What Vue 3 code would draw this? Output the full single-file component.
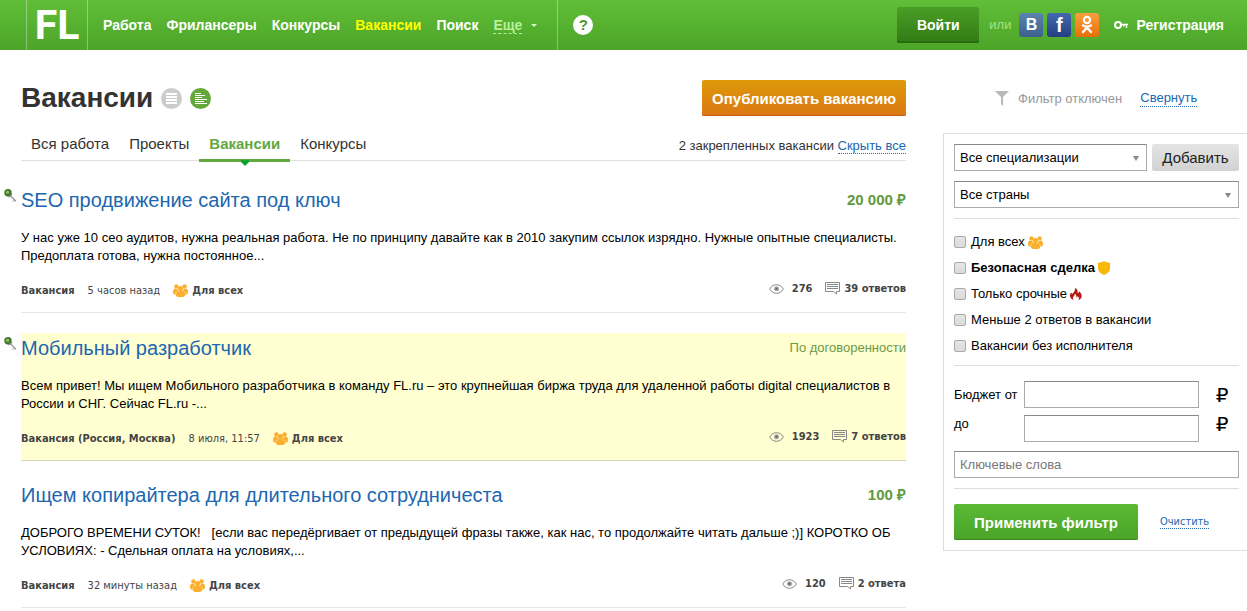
<script setup>
import { ref } from 'vue'

const navItems = [
  { label: 'Работа' },
  { label: 'Фрилансеры' },
  { label: 'Конкурсы' },
  { label: 'Вакансии', active: true },
  { label: 'Поиск' },
]

const tabs = [
  { label: 'Вся работа' },
  { label: 'Проекты' },
  { label: 'Вакансии', active: true },
  { label: 'Конкурсы' },
]

const vacancies = [
  {
    title: 'SEO продвижение сайта под ключ',
    price: '20 000 ₽',
    text: 'У нас уже 10 сео аудитов, нужна реальная работа. Не по принципу давайте как в 2010 закупим ссылок изрядно. Нужные опытные специалисты. Предоплата готова, нужна постоянное...',
    kind: 'Вакансия',
    time: '5 часов назад',
    views: '276',
    answers: '39 ответов',
    pinned: true,
  },
  {
    title: 'Мобильный разработчик',
    price: 'По договоренности',
    negotiable: true,
    text: 'Всем привет! Мы ищем Мобильного разработчика в команду FL.ru – это крупнейшая биржа труда для удаленной работы digital специалистов в России и СНГ. Сейчас FL.ru -...',
    kind: 'Вакансия (Россия, Москва)',
    time: '8 июля, 11:57',
    views: '1923',
    answers: '7 ответов',
    pinned: true,
    highlighted: true,
  },
  {
    title: 'Ищем копирайтера для длительного сотрудничеста',
    price: '100 ₽',
    text: 'ДОБРОГО ВРЕМЕНИ СУТОК! \u00a0 [если вас передёргивает от предыдущей фразы также, как нас, то продолжайте читать дальше ;)] КОРОТКО ОБ УСЛОВИЯХ: - Сдельная оплата на условиях,...',
    kind: 'Вакансия',
    time: '32 минуты назад',
    views: '120',
    answers: '2 ответа',
  },
]

const options = ref([
  { id: 'all', label: 'Для всех', icon: 'people', checked: false },
  { id: 'safe', label: 'Безопасная сделка', icon: 'shield', bold: true, checked: false },
  { id: 'urgent', label: 'Только срочные', icon: 'fire', checked: false },
  { id: 'few', label: 'Меньше 2 ответов в вакансии', checked: false },
  { id: 'free', label: 'Вакансии без исполнителя', checked: false },
])

const budgetFrom = ref('')
const budgetTo = ref('')
const keywords = ref('')
</script>

<template>
  <svg class="sprite" aria-hidden="true">
    <symbol id="people" viewBox="0 0 15 13">
      <circle cx="3.4" cy="2.4" r="2.200" />
      <circle cx="11.600" cy="2.4" r="2.200" />
      <path d="M0 7.800C0 5.400 1.200 4.400 3 4.600L5 6L4 10.500H1.600C.5 10.500 0 9.400 0 7.800Z" />
      <path d="M15 7.800C15 5.400 13.800 4.400 12 4.600L10 6L11 10.500H13.400C14.500 10.500 15 9.400 15 7.800Z" />
      <circle cx="7.500" cy="4.600" r="2.700" />
      <path d="M2.800 10.500C2.800 8 4.300 6.700 6 6.700H9C10.700 6.700 12.200 8 12.200 10.500C12.200 12 11.200 13 9.800 13H5.200C3.800 13 2.800 12 2.800 10.500Z" />
      <path d="M5 5.500L6 7.300M10 5.500L9 7.300M3.400 7.800L2.800 10M11.600 7.800L12.200 10" stroke="#ffe2a8" stroke-width=".7" />
    </symbol>
    <symbol id="shield" viewBox="0 0 12 14">
      <path d="M6 0C7.500 1.100 9.500 1.700 12 1.700V7.500C12 10.500 9.500 12.500 6 14C2.500 12.500 0 10.500 0 7.500V1.700C2.500 1.700 4.500 1.100 6 0Z" />
    </symbol>
    <symbol id="fire" viewBox="0 0 12 12">
      <path d="M5 0C8 1.200 7.800 3.400 7.600 5.200C8.600 4.800 9 4.100 9 3.200C11 4.700 12 6.800 11.600 8.700C11.300 10.300 10.300 11.400 8.500 12C9.300 10.300 8.800 8.900 7.700 7.900C7.500 9 7 9.400 6.400 9.500C6.500 7.700 6 6.500 4.800 5.700C5 7.300 3.300 8.300 3 9.800C2.900 10.700 3.200 11.400 3.700 12C1.500 11.300 .2 9.900 0 8C-.1 6.500 .6 5.500 1.300 4.600L2.100 6.100C3.800 4.700 5.400 2.500 5 0Z" />
    </symbol>
    <symbol id="eye" viewBox="0 0 15 10">
      <path d="M.6 5C2.500 2 4.900 .7 7.500 .7S12.500 2 14.400 5C12.500 8 10.100 9.300 7.500 9.300S2.500 8 .6 5Z" fill="none" stroke="#888" />
      <circle cx="7.500" cy="4.700" r="2.500" fill="#aaa" />
      <circle cx="7.500" cy="4.700" r="1.200" fill="#666" />
    </symbol>
    <symbol id="bubble" viewBox="0 0 15 13">
      <path d="M.5.500H14.500V9.500H11.500V12L8.500 9.500H.5Z" fill="none" stroke="#888" />
      <path d="M2 2.500H13M2 4.500H13M2 6.500H13" stroke="#888" shape-rendering="crispEdges" />
    </symbol>
    <symbol id="pin" viewBox="0 0 13 13">
      <path d="M6.500 6L12 12H8" stroke="#b6bac4" fill="none" />
      <path d="M6 6.500L11.500 12" stroke="#656b76" />
      <circle cx="4" cy="3.800" r="3.700" fill="#3c7a29" />
      <path d="M4.500 8L8 5" stroke="#6d9160" stroke-width="1.500" />
      <circle cx="3.600" cy="3.200" r="1.700" fill="#91b867" />
    </symbol>
  </svg>

  <header class="top">
    <a class="logo" href="#">FL</a>
    <nav class="nav">
      <a v-for="n in navItems" :key="n.label" href="#" :class="{ active: n.active }">{{ n.label }}</a>
      <button class="more" type="button"><span>Еще</span><i></i></button>
    </nav>
    <div class="help-cell"><a class="help" href="#" aria-label="Помощь">?</a></div>
    <div class="account">
      <button class="login" type="button">Войти</button>
      <span class="or">или</span>
      <div class="socials">
        <a class="vk" href="#">B</a>
        <a class="fb" href="#">f</a>
        <a class="ok" href="#" aria-label="OK">
          <svg width="12" height="20" viewBox="0 0 12 20" fill="none" stroke="#fff" stroke-linecap="round">
            <circle cx="6" cy="5" r="3.100" stroke-width="2.200" />
            <path d="M2 10.500Q6 13 10 10.500M6 12.500L2 17M6 12.500L10 17" stroke-width="2.400" />
          </svg>
        </a>
      </div>
      <a class="register" href="#">
        <svg width="14" height="8" viewBox="0 0 14 8" fill="none" stroke="#fff">
          <circle cx="4" cy="4" r="3" stroke-width="2" />
          <path d="M7 3.500H14M12.500 4V7M10 4V5.500" stroke-width="1.500" />
        </svg>
        <span>Регистрация</span>
      </a>
    </div>
  </header>

  <div class="page">
    <main>
      <div class="heading">
        <h1>Вакансии</h1>
        <button class="round" type="button" aria-label="Кратко">
          <svg width="21" height="21" viewBox="0 0 21 21"><circle cx="10.500" cy="10.500" r="10.500" fill="#ccc" /><path d="M5 6H16M5 9H16M5 12H16M5 15H16" stroke="#fff" stroke-width="2" /></svg>
        </button>
        <button class="round" type="button" aria-label="Подробно">
          <svg width="21" height="21" viewBox="0 0 21 21"><circle cx="10.500" cy="10.500" r="10.500" fill="#63a83a" /><path d="M5 5.500H11M5 7.500H15M5 9.500H12M5 11.500H17M5 13.500H14M5 15.500H17" stroke="#fff" /></svg>
        </button>
        <button class="publish" type="button">Опубликовать вакансию</button>
      </div>

      <div class="tabs">
        <a v-for="t in tabs" :key="t.label" href="#" :class="{ current: t.active }">
          {{ t.label }}
          <svg v-if="t.active" class="heart" width="8" height="6" viewBox="0 0 8 6"><path d="M0 0H3L4 1L5 0H8V2L4 6L0 2Z" fill="#0da02c" /></svg>
        </a>
        <p class="pinned-info">2 закрепленных вакансии <a class="dotted" href="#">Скрыть все</a></p>
      </div>

      <article v-for="v in vacancies" :key="v.title" class="item" :class="{ highlighted: v.highlighted }">
        <svg v-if="v.pinned" class="pin" width="13" height="13"><use href="#pin" /></svg>
        <div class="item-head">
          <h2><a href="#">{{ v.title }}</a></h2>
          <span class="price" :class="{ negotiable: v.negotiable }">{{ v.price }}</span>
        </div>
        <p class="desc">{{ v.text }}</p>
        <div class="meta">
          <b>{{ v.kind }}</b>
          <span class="time">{{ v.time }}</span>
          <svg class="people" width="15" height="13"><use href="#people" /></svg>
          <b>Для всех</b>
          <div class="stats">
            <svg width="15" height="10"><use href="#eye" /></svg>
            <b class="views">{{ v.views }}</b>
            <svg width="15" height="13"><use href="#bubble" /></svg>
            <b class="answers">{{ v.answers }}</b>
          </div>
        </div>
      </article>
    </main>

    <aside>
      <div class="filter-state">
        <svg width="14" height="15" viewBox="0 0 14 15"><path d="M0 0H14L8 6V15L6 13V6Z" fill="#b9b9b9" /></svg>
        <span>Фильтр отключен</span>
        <a class="dotted" href="#">Свернуть</a>
      </div>

      <form class="panel" @submit.prevent>
        <div class="row">
          <div class="select">
            <select aria-label="Специализация"><option>Все специализации</option></select>
            <svg width="6" height="5"><path d="M0 0H6L3 5Z" fill="#888" /></svg>
          </div>
          <button class="add" type="button">Добавить</button>
        </div>
        <div class="select countries">
          <select aria-label="Страна"><option>Все страны</option></select>
          <svg width="6" height="5"><path d="M0 0H6L3 5Z" fill="#888" /></svg>
        </div>

        <div class="checks">
          <label v-for="o in options" :key="o.id" :class="{ strong: o.bold }">
            <input v-model="o.checked" type="checkbox" />
            <span>{{ o.label }}</span>
            <svg v-if="o.icon" :class="o.icon"><use :href="'#' + o.icon" /></svg>
          </label>
        </div>

        <div class="budget">
          <label for="budget-from">Бюджет от</label>
          <input id="budget-from" v-model="budgetFrom" type="text" />
          <span class="rub">₽</span>
          <label class="to" for="budget-to">до</label>
          <input id="budget-to" v-model="budgetTo" type="text" />
          <span class="rub to">₽</span>
        </div>
        <input v-model="keywords" class="keywords" type="text" placeholder="Ключевые слова" aria-label="Ключевые слова" />

        <div class="actions">
          <button class="apply" type="submit">Применить фильтр</button>
          <a class="dotted clear" href="#">Очистить</a>
        </div>
      </form>
    </aside>
  </div>
</template>

<style>
body {
  margin: 0;
  background: #fff;
  overflow-x: hidden;
}
#app {
  font: 13px/18px "Liberation Sans", Arial, sans-serif;
  color: #000;
}
</style>

<style scoped>
* {
  box-sizing: border-box;
}
h1, h2, p {
  margin: 0;
  font-weight: normal;
}
a {
  color: #2067b0;
  text-decoration: none;
}
button, input, select {
  font-family: inherit;
  margin: 0;
}
button {
  border: 0;
  padding: 0;
  background: none;
  cursor: pointer;
}
svg {
  flex: none;
  display: block;
}
.sprite {
  position: absolute;
  width: 0;
  height: 0;
}

/* Header */
.top {
  display: flex;
  height: 50px;
  padding-left: 26px;
  padding-right: 23px;
  background: linear-gradient(#60be37, #4da529);
  font-weight: bold;
}
.logo {
  width: 62px;
  border: solid rgba(255, 255, 255, .35);
  border-width: 0 1px;
  color: #fff;
  font: bold 41px/50px Roboto, "Open Sans", sans-serif;
  text-align: center;
}
.nav {
  display: flex;
  align-items: center;
  gap: 15px;
  padding: 0 20px 0 15px;
  border-right: 1px solid rgba(255, 255, 255, .35);
  font-size: 14px;
}
.nav a, .register {
  color: #fff;
}
.nav a.active {
  color: #ff0;
}
.more {
  display: flex;
  align-items: center;
  gap: 9px;
  color: #b9f09c;
  font-size: 14px;
  font-weight: bold;
}
.more span {
  border-bottom: 1px dashed #b9f09c;
}
.more i {
  border: 3px solid transparent;
  border-top-color: #d6f5c8;
  border-bottom: 0;
}
.help-cell {
  display: flex;
  align-items: center;
  padding-left: 15px;
}
.help {
  width: 20px;
  height: 20px;
  border-radius: 50%;
  background: #fff;
  color: #4b9a2a;
  font-size: 15px;
  line-height: 20px;
  text-align: center;
}
.account {
  display: flex;
  align-items: center;
  margin-left: auto;
}
.login {
  width: 82px;
  height: 36px;
  border-radius: 2px;
  background: linear-gradient(#4a9e26, #317b14);
  box-shadow: inset 0 -2px #286a10;
  color: #fff;
  font-size: 14px;
  font-weight: bold;
}
.or {
  margin: 0 8px 0 10px;
  color: #a6e386;
  font-weight: normal;
}
.socials {
  display: flex;
  gap: 4px;
  margin-right: 15px;
}
.socials a {
  display: flex;
  justify-content: center;
  align-items: center;
  width: 24px;
  height: 24px;
  border-radius: 3px;
  color: #fff;
}
.socials .vk {
  background: linear-gradient(#5b83ac, #3c618c);
  font-size: 16px;
}
.socials .fb {
  background: linear-gradient(#4568ae, #243f82);
  font-size: 20px;
}
.socials .ok {
  background: linear-gradient(#f9a040, #e96d05);
}
.register {
  display: flex;
  align-items: center;
  gap: 8px;
  font-size: 14px;
}

/* Page */
.page {
  display: grid;
  grid-template-columns: minmax(0, 1fr) 304px;
  gap: 37px;
  padding-left: 21px;
}
main {
  padding-top: 30px;
}
.heading {
  display: flex;
  align-items: center;
  height: 36px;
}
h1 {
  margin-right: 8px;
  color: #333;
  font-size: 28px;
  font-weight: bold;
  line-height: 36px;
}
.round {
  margin-right: 8px;
}
.publish {
  height: 36px;
  margin-left: auto;
  padding: 0 10px;
  border-radius: 2px;
  background: linear-gradient(#dd9a0b, #db7713);
  box-shadow: inset 0 -1px #c95f16;
  color: #fff;
  font-size: 15px;
  font-weight: bold;
}
.tabs {
  display: flex;
  height: 45px;
  margin-bottom: 24px;
  padding-top: 13px;
  border-bottom: 1px solid #e1e1e1;
}
.tabs > a {
  position: relative;
  height: 33px;
  padding: 0 10px;
  color: #333;
  font-size: 15px;
  line-height: 30px;
}
.tabs > .current {
  border-bottom: 3px solid #62a83f;
  color: #62a83f;
  font-weight: bold;
}
.heart {
  position: absolute;
  left: 50%;
  top: 31px;
  margin-left: -4px;
}
.pinned-info {
  margin-left: auto;
  color: #333;
  line-height: 33px;
}
.dotted {
  border-bottom: 1px dotted #2067b0;
}

/* Vacancies */
.item {
  position: relative;
  margin-bottom: 20px;
  padding-bottom: 12px;
  border-bottom: 1px solid #e6e6e6;
}
.highlighted {
  margin-bottom: 19px;
  background: #ffffd2;
  border-color: #d6d6b8;
}
.pin {
  position: absolute;
  left: -17px;
  top: 4px;
}
.item-head {
  display: flex;
  justify-content: space-between;
  line-height: 30px;
}
h2 {
  font-size: 20px;
}
.price {
  color: #5f9a3c;
  font-size: 15px;
  font-weight: bold;
}
.negotiable {
  font-size: 13px;
  font-weight: normal;
  color: #6b9a45;
}
.desc {
  margin: 14px 0 16px;
}
.meta {
  display: flex;
  align-items: center;
  color: #444;
  font: 11px/19px Tahoma, "DejaVu Sans Condensed", "Noto Sans", sans-serif;
}
.time {
  margin: 0 13px;
}
.people {
  width: 15px;
  height: 13px;
  margin-right: 4px;
  fill: #fbaf2e;
}
.stats {
  display: flex;
  align-items: center;
  align-self: flex-start;
  margin-left: auto;
  line-height: 15px;
}
.views {
  margin: 0 13px 0 8px;
}
.answers {
  margin-left: 4px;
}

/* Filter */
.filter-state {
  display: flex;
  align-items: center;
  height: 83px;
  padding: 14px 0 0 52px;
  color: #999;
}
.filter-state span {
  margin: 0 18px 0 9px;
}
.filter-state .dotted {
  line-height: 16px;
}
.panel {
  padding: 10px 8px 10px 10px;
  border: 1px solid #ddd;
  border-right: 0;
}
.row {
  display: flex;
  gap: 5px;
}
.select {
  position: relative;
  flex: 1;
}
.select svg {
  position: absolute;
  right: 8px;
  top: 12px;
  pointer-events: none;
}
select, .panel input[type="text"] {
  display: block;
  width: 100%;
  height: 27px;
  padding: 0 5px;
  border: 1px solid #aaa;
  border-top-color: #888;
  border-radius: 0;
  background: #fff;
  color: #000;
  font-size: 13px;
}
select {
  appearance: none;
}
.add {
  width: 87px;
  height: 27px;
  border-radius: 2px;
  background: linear-gradient(#e4e4e4, #d2d2d2);
  color: #222;
  font-size: 15px;
}
.countries {
  margin-top: 10px;
}
.checks {
  margin: 10px 0 15px;
  padding: 10px 0 6px;
  border: solid #ddd;
  border-width: 1px 0;
}
.checks label {
  display: flex;
  align-items: center;
  height: 26px;
}
.checks input {
  width: 12px;
  height: 12px;
  margin-right: 5px;
  border: 1px solid #aaa;
  border-radius: 2px;
  background: linear-gradient(#e6e6e6, #dadada);
  appearance: none;
}
.checks input:checked {
  background: #62a83f;
}
.checks svg {
  margin: 0 0 0 3px;
}
.strong {
  font-weight: bold;
}
.shield {
  width: 12px;
  height: 14px;
  fill: #f8b808;
}
.fire {
  width: 12px;
  height: 12px;
  fill: #b51a14;
}
.budget {
  display: grid;
  grid-template-columns: 64px minmax(0, 1fr) 34px;
  gap: 6px;
}
.budget label {
  line-height: 27px;
}
.rub {
  justify-self: center;
  font: 20px/28px "DejaVu Sans", sans-serif;
}
.budget .to {
  line-height: 18px;
}
.panel .keywords {
  margin-top: 9px;
}
.keywords::placeholder {
  color: #777;
}
.actions {
  display: flex;
  align-items: center;
  gap: 22px;
  margin-top: 10px;
  padding-top: 15px;
  border-top: 1px solid #ddd;
}
.apply {
  height: 36px;
  padding: 0 20px;
  border-radius: 2px;
  background: linear-gradient(#5cb935, #4aa428);
  box-shadow: inset 0 -1px #3d8a20;
  color: #fff;
  font-size: 15px;
  font-weight: bold;
}
.clear {
  font: 11px/13px Tahoma, "DejaVu Sans Condensed", "Noto Sans", sans-serif;
}
</style>
